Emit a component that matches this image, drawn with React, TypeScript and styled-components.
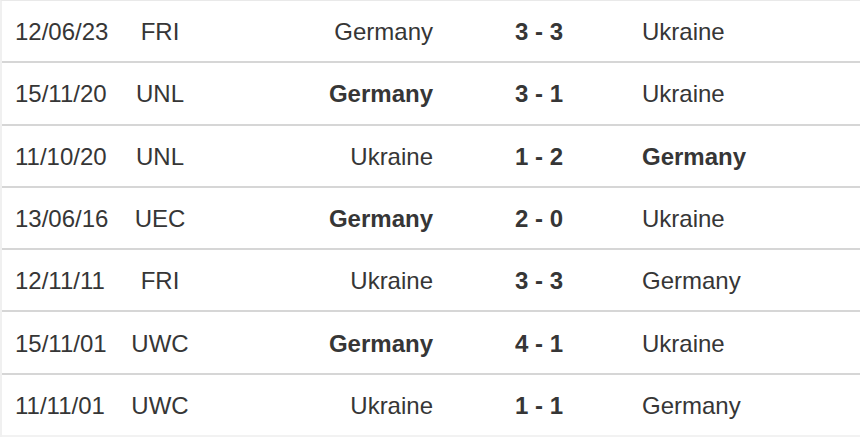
import React from "react";
import styled, { createGlobalStyle } from "styled-components";

type Match = {
  date: string;
  comp: string;
  home: string;
  score: string;
  away: string;
  winner: "home" | "away" | null;
};

const matches: Match[] = [
  { date: "12/06/23", comp: "FRI", home: "Germany", score: "3 - 3", away: "Ukraine", winner: null },
  { date: "15/11/20", comp: "UNL", home: "Germany", score: "3 - 1", away: "Ukraine", winner: "home" },
  { date: "11/10/20", comp: "UNL", home: "Ukraine", score: "1 - 2", away: "Germany", winner: "away" },
  { date: "13/06/16", comp: "UEC", home: "Germany", score: "2 - 0", away: "Ukraine", winner: "home" },
  { date: "12/11/11", comp: "FRI", home: "Ukraine", score: "3 - 3", away: "Germany", winner: null },
  { date: "15/11/01", comp: "UWC", home: "Germany", score: "4 - 1", away: "Ukraine", winner: "home" },
  { date: "11/11/01", comp: "UWC", home: "Ukraine", score: "1 - 1", away: "Germany", winner: null },
];

const App = () => {
  return (
    <>
      <GlobalStyle />
      <Table>
        {matches.map((m, i) => (
          <Row key={i} $last={i === matches.length - 1}>
            <DateCell>{m.date}</DateCell>
            <CompCell>{m.comp}</CompCell>
            <HomeCell $bold={m.winner === "home"}>{m.home}</HomeCell>
            <ScoreCell>{m.score}</ScoreCell>
            <AwayCell $bold={m.winner === "away"}>{m.away}</AwayCell>
          </Row>
        ))}
      </Table>
    </>
  );
};

const GlobalStyle = createGlobalStyle`
  html, body {
    margin: 0;
    padding: 0;
    background: #ffffff;
  }
  body {
    font-family: "Liberation Sans", Arial, sans-serif;
    color: #363636;
  }
`;

const Table = styled.div`
  width: 860px;
  height: 437px;
  box-sizing: border-box;
  border-top: 1px solid #e9e9e9;
  border-left: 2px solid #f0f0f0;
  display: flex;
  flex-direction: column;
`;

const Row = styled.div<{ $last: boolean }>`
  height: 62.5px;
  box-sizing: border-box;
  padding-top: 2px;
  border-bottom: 2px solid ${(p) => (p.$last ? "#f2f2f2" : "#d6d6d6")};
  display: grid;
  grid-template-columns: 118px 80px 236px 206px 1fr;
  align-items: center;
  font-size: 24px;
  line-height: 28px;
`;

const DateCell = styled.div`
  padding-left: 13px;
`;

const CompCell = styled.div`
  text-align: center;
`;

const HomeCell = styled.div<{ $bold: boolean }>`
  text-align: right;
  padding-right: 3px;
  font-weight: ${(p) => (p.$bold ? 700 : 400)};
`;

const ScoreCell = styled.div`
  text-align: center;
  font-weight: 700;
`;

const AwayCell = styled.div<{ $bold: boolean }>`
  text-align: left;
  font-weight: ${(p) => (p.$bold ? 700 : 400)};
`;

export default App;
